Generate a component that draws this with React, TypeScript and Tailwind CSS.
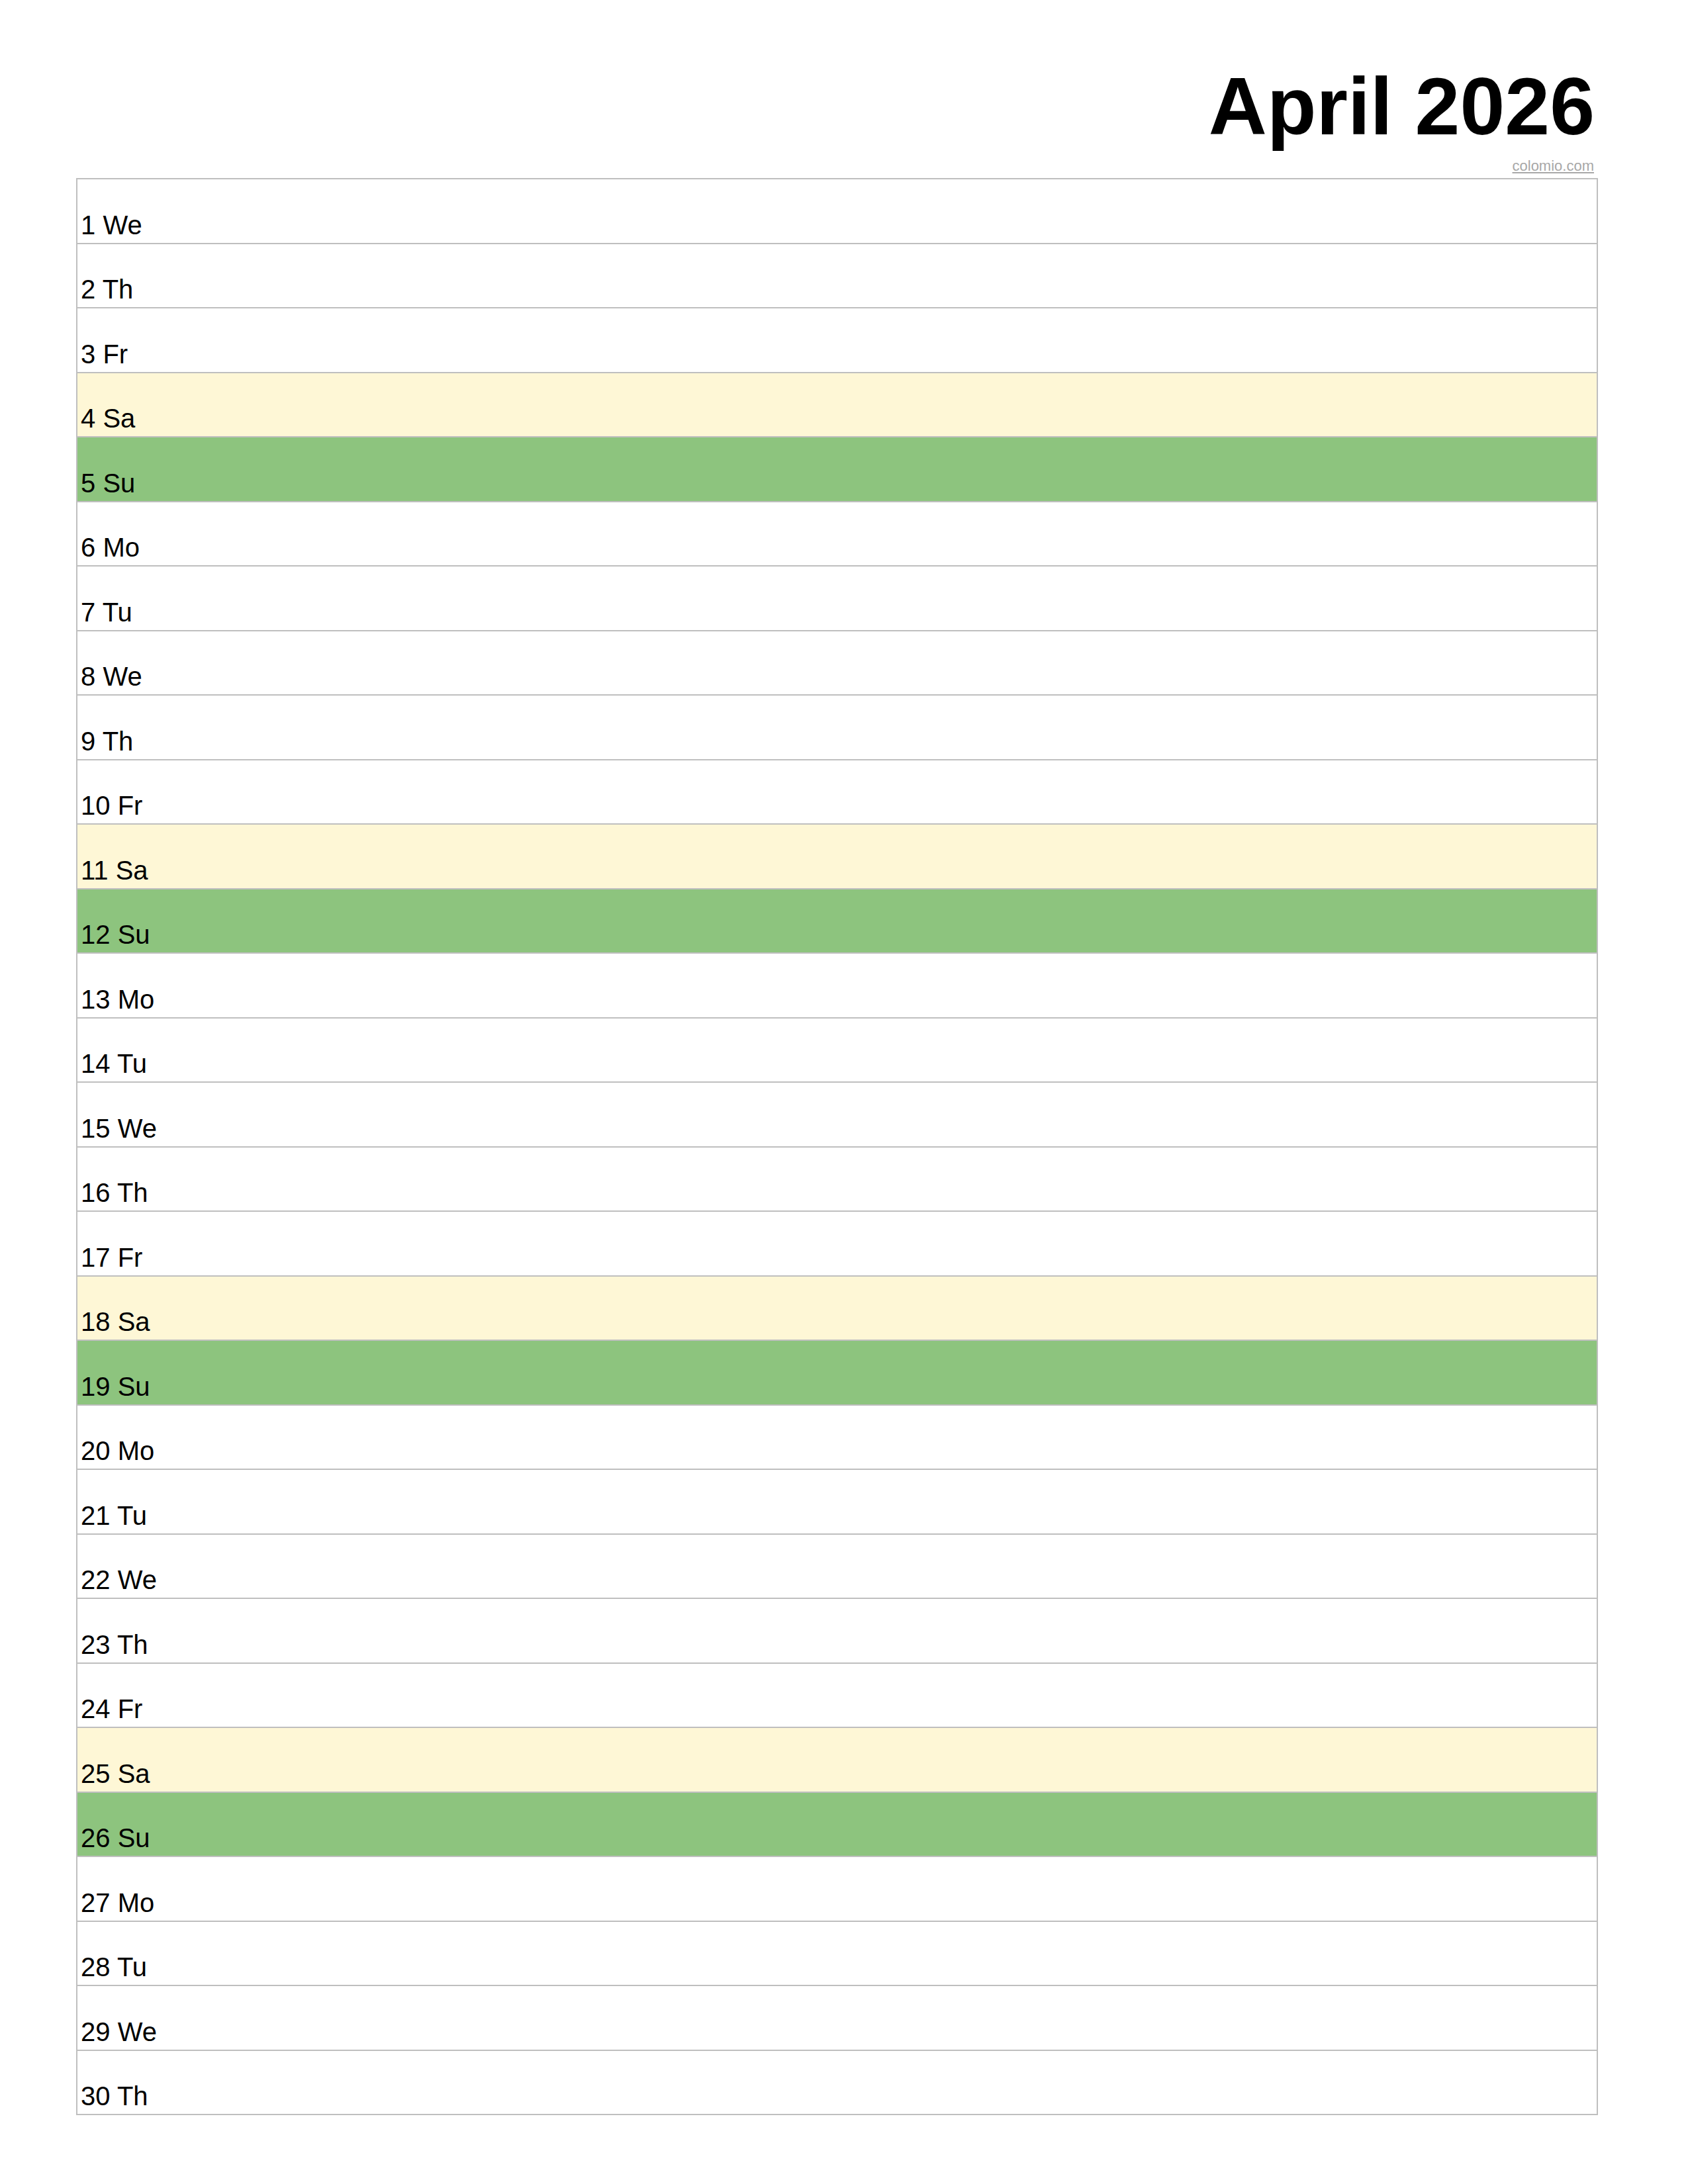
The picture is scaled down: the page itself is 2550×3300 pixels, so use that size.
const days = ["We", "Th", "Fr", "Sa", "Su", "Mo", "Tu"];

const rows = Array.from({ length: 30 }, (_, i) => ({
  day: i + 1,
  name: days[i % 7],
}));

export default function App() {
  return (
    <div className="w-[2550px] min-h-[3300px] bg-white text-black font-['Liberation_Sans',Arial,sans-serif]">
      <div className="ml-[115px] w-[2299px] pt-[100px]">
        {/* titel */}
        <h1 className="text-right text-[122px] font-bold leading-none pr-[5px]">April 2026</h1>
        <div className="mt-[18px] text-right pr-[6px] leading-none">
          <span className="text-[22px] text-[#a8a8a8] underline">colomio.com</span>
        </div>

        {/* tabel met dagen */}
        <div className="mt-[7px] border-t-2 border-x-2 border-[#bfbfbf]">
          {rows.map((r) => (
            <div
              key={r.day}
              className={
                "h-[97.5px] border-b-2 border-[#bfbfbf] flex items-end pl-[5px] pb-[7px] " +
                (r.name === "Sa" ? "bg-[#fef7d6]" : r.name === "Su" ? "bg-[#8dc47e]" : "bg-white")
              }
            >
              <span className="text-[40px] leading-none">
                {r.day} {r.name}
              </span>
            </div>
          ))}
        </div>
      </div>
    </div>
  );
}
